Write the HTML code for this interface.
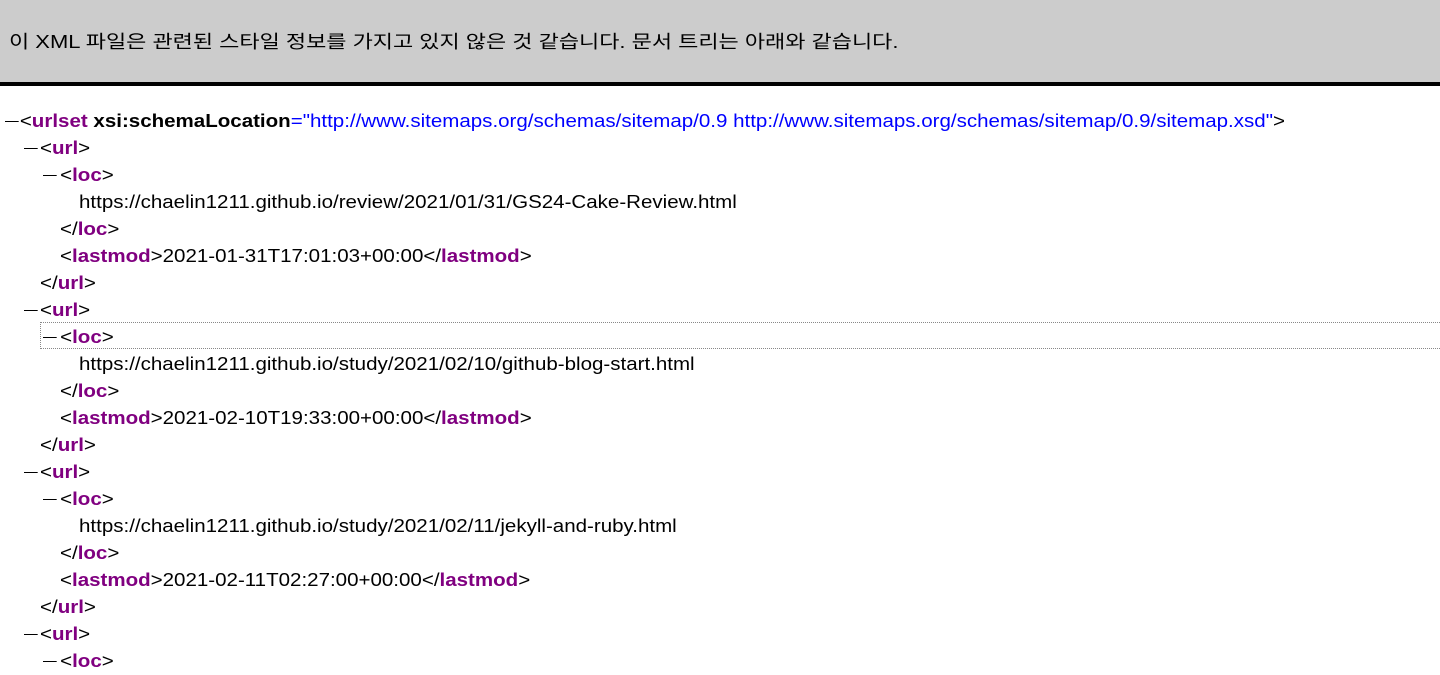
<!DOCTYPE html>
<html><head><meta charset="utf-8"><style>
body{margin:0;width:1440px;height:660px;overflow:hidden;background:#fff;font-family:"Liberation Sans","Noto Sans CJK KR",sans-serif;font-size:18px;color:#000}
.hd{position:absolute;left:0;top:0;width:1440px;height:82px;background:#ccc;border-bottom:4px solid #000}
.hd span{position:absolute;left:9px;top:29px;line-height:26px;font-size:18px;white-space:nowrap;transform:scaleX(1.22);transform-origin:0 0}
.r{position:absolute;height:27px;line-height:27px;white-space:nowrap;transform:scaleX(1.14);transform-origin:0 0}
.d{position:absolute;width:12px;height:1px;background:#000;top:13px}
.t{color:#800080;font-weight:bold}
.a{font-weight:bold}
.v{color:#00f}
.foc{position:absolute;left:40px;top:322px;width:1400px;height:27px;border:1px dotted #888;border-right:none;box-sizing:border-box}
</style></head><body>
<div class="hd"><span>이 XML 파일은 관련된 스타일 정보를 가지고 있지 않은 것 같습니다. 문서 트리는 아래와 같습니다.</span></div>
<div class="foc"></div>
<div class="r" style="top:108px;left:5px"><i class="d" style="left:0"></i><span style="margin-left:13px">&lt;<span class="t">urlset</span> <span class="a">xsi:schemaLocation</span><span class="v">="http://www.sitemaps.org/schemas/sitemap/0.9 http://www.sitemaps.org/schemas/sitemap/0.9/sitemap.xsd"</span>&gt;</span></div>

<div class="r" style="top:135px;left:24px"><i class="d"></i><span style="margin-left:14px">&lt;<span class="t">url</span>&gt;</span></div>
<div class="r" style="top:162px;left:43px"><i class="d"></i><span style="margin-left:15px">&lt;<span class="t">loc</span>&gt;</span></div>
<div class="r" style="top:189px;left:79px">https://chaelin1211.github.io/review/2021/01/31/GS24-Cake-Review.html</div>
<div class="r" style="top:216px;left:60px">&lt;/<span class="t">loc</span>&gt;</div>
<div class="r" style="top:243px;left:60px">&lt;<span class="t">lastmod</span>&gt;2021-01-31T17:01:03+00:00&lt;/<span class="t">lastmod</span>&gt;</div>
<div class="r" style="top:270px;left:40px">&lt;/<span class="t">url</span>&gt;</div>

<div class="r" style="top:297px;left:24px"><i class="d"></i><span style="margin-left:14px">&lt;<span class="t">url</span>&gt;</span></div>
<div class="r" style="top:324px;left:43px"><i class="d"></i><span style="margin-left:15px">&lt;<span class="t">loc</span>&gt;</span></div>
<div class="r" style="top:351px;left:79px">https://chaelin1211.github.io/study/2021/02/10/github-blog-start.html</div>
<div class="r" style="top:378px;left:60px">&lt;/<span class="t">loc</span>&gt;</div>
<div class="r" style="top:405px;left:60px">&lt;<span class="t">lastmod</span>&gt;2021-02-10T19:33:00+00:00&lt;/<span class="t">lastmod</span>&gt;</div>
<div class="r" style="top:432px;left:40px">&lt;/<span class="t">url</span>&gt;</div>

<div class="r" style="top:459px;left:24px"><i class="d"></i><span style="margin-left:14px">&lt;<span class="t">url</span>&gt;</span></div>
<div class="r" style="top:486px;left:43px"><i class="d"></i><span style="margin-left:15px">&lt;<span class="t">loc</span>&gt;</span></div>
<div class="r" style="top:513px;left:79px">https://chaelin1211.github.io/study/2021/02/11/jekyll-and-ruby.html</div>
<div class="r" style="top:540px;left:60px">&lt;/<span class="t">loc</span>&gt;</div>
<div class="r" style="top:567px;left:60px">&lt;<span class="t">lastmod</span>&gt;2021-02-11T02:27:00+00:00&lt;/<span class="t">lastmod</span>&gt;</div>
<div class="r" style="top:594px;left:40px">&lt;/<span class="t">url</span>&gt;</div>

<div class="r" style="top:621px;left:24px"><i class="d"></i><span style="margin-left:14px">&lt;<span class="t">url</span>&gt;</span></div>
<div class="r" style="top:648px;left:43px"><i class="d"></i><span style="margin-left:15px">&lt;<span class="t">loc</span>&gt;</span></div>
</body></html>
